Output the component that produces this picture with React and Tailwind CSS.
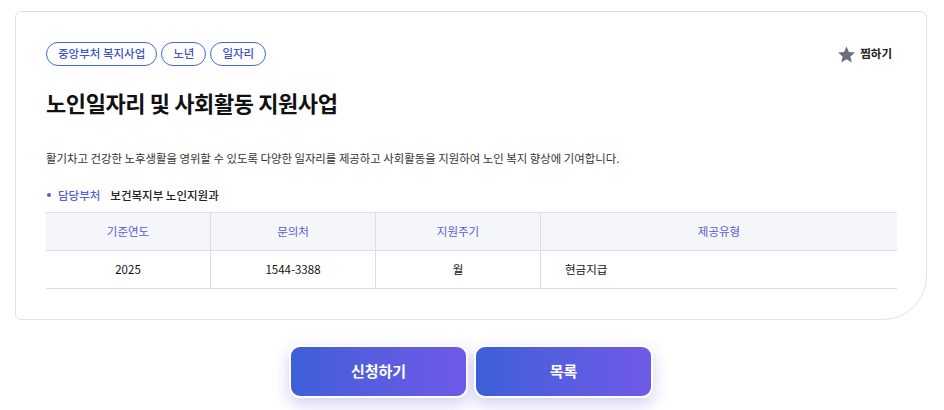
import React from 'react';

const font = { fontFamily: '"Noto Sans CJK KR", "Noto Sans", sans-serif' };

const tags = ['중앙부처 복지사업', '노년', '일자리'];

const columns = [
  { head: '기준연도', value: '2025' },
  { head: '문의처', value: '1544-3388' },
  { head: '지원주기', value: '월' },
];

export default function App() {
  return (
    <div className="min-h-[410px] bg-white text-[#111]" style={font}>
      <div className="pt-[11px] pl-[15px]">
        {/* 상세 카드 */}
        <div className="w-[912px] rounded-[6px] rounded-br-[44px] border border-[#e2e2e2] bg-white pt-[30px] pb-[30px] pl-[30px] pr-[29px]">
          <div className="flex items-center justify-between">
            <div className="flex gap-[4px]">
              {tags.map(t => (
                <span
                  key={t}
                  className="flex h-[24px] items-center rounded-full border border-[#4466dd] px-[11px] text-[11.5px] font-medium text-[#3d55c9]"
                >
                  {t}
                </span>
              ))}
            </div>
            <button className="mr-[5px] flex items-center gap-[4px] text-[11.5px] font-bold text-[#222]">
              <svg width="19" height="19" viewBox="0 0 24 24" fill="#6b6e80">
                <path d="M12 1.8l3.05 7.02 7.6.68-5.76 5.02 1.71 7.46L12 18.1l-6.6 3.88 1.71-7.46L1.35 9.5l7.6-.68z" />
              </svg>
              찜하기
            </button>
          </div>

          <h1 className="mt-[21px] text-[22px] font-bold leading-[30px] tracking-[-0.4px]">
            노인일자리 및 사회활동 지원사업
          </h1>

          <p className="mt-[31px] text-[11.4px] leading-[20px] text-[#333]">
            활기차고 건강한 노후생활을 영위할 수 있도록 다양한 일자리를 제공하고 사회활동을 지원하여 노인 복지 향상에 기여합니다.
          </p>

          <div className="mt-[17px] flex items-center text-[11.5px] leading-[20px]">
            <span className="ml-[1px] mr-[7px] h-[4px] w-[4px] rounded-full bg-[#4f5ee0]" />
            <span className="font-medium text-[#5560e0]">담당부처</span>
            <span className="ml-[10px] font-medium text-[#222]">보건복지부 노인지원과</span>
          </div>

          {/* 정보 표 */}
          <div className="mt-[7px] grid grid-cols-[165px_165px_165px_1fr] border-y border-[#dedede] text-[11.5px]">
            {columns.map(c => (
              <div key={c.head} className="flex h-[37px] items-center justify-center border-r border-[#dedede] bg-[#f5f6fa] text-[#5a5ad8]">
                {c.head}
              </div>
            ))}
            <div className="flex h-[37px] items-center justify-center bg-[#f5f6fa] text-[#5a5ad8]">
              제공유형
            </div>
            {columns.map(c => (
              <div key={c.value} className="flex h-[38px] items-center justify-center border-t border-r border-[#dedede] text-[#111]">
                {c.value}
              </div>
            ))}
            <div className="flex h-[38px] items-center border-t border-[#dedede] pl-[24px] text-[#111]">
              현금지급
            </div>
          </div>
        </div>

        {/* 하단 버튼 */}
        <div className="mt-[25px] flex w-[912px] justify-center gap-[6px]">
          <button className="h-[53px] w-[179px] rounded-[11px] border-2 border-white bg-gradient-to-r from-[#3d5fd8] to-[#6f5ae8] text-[15px] font-bold text-white shadow-[0_6px_16px_rgba(90,80,200,0.28)]">
            신청하기
          </button>
          <button className="h-[53px] w-[179px] rounded-[11px] border-2 border-white bg-gradient-to-r from-[#3d5fd8] to-[#6f5ae8] text-[15px] font-bold text-white shadow-[0_6px_16px_rgba(90,80,200,0.28)]">
            목록
          </button>
        </div>
      </div>
    </div>
  );
}
